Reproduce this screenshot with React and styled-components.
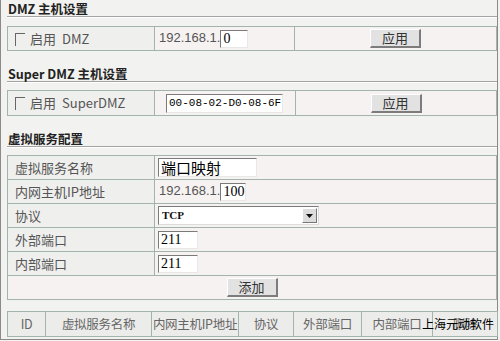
import React from "react"
import styled, { createGlobalStyle } from "styled-components"

const GlobalStyle = createGlobalStyle`
  html, body {
    margin: 0;
    padding: 0;
    background: #f2f2f0;
  }
  body {
    width: 500px;
    height: 341px;
    overflow: hidden;
    font-family: "Noto Sans CJK SC", "Liberation Sans", sans-serif;
  }
`

const cjk = `"Noto Sans CJK SC", "Liberation Sans", sans-serif`
const serif = `"Liberation Serif", "Noto Sans CJK SC", serif`

const Frame = styled.div`
  position: relative;
  width: 498px;
  height: 340px;
  box-sizing: border-box;
  border-left: 1px solid #8a8a8a;
  border-right: 1px solid #8a8a8a;
  border-bottom: 1px solid #8a8a8a;
  padding: 1px 0 0 6px;
  background: #f2f2f0;
`

const Section = styled.section`
  margin-top: ${p => (p.first ? "0" : "15px")};
`

const Title = styled.h3`
  margin: 0;
  height: 15px;
  line-height: 15px;
  font-family: ${cjk};
  font-size: 12.5px;
  font-weight: 700;
  color: #222;
  border-bottom: 1px solid #a3a3a3;
  box-shadow: 0 1px 0 #ffffff;
  padding-left: 1px;
`

const Table = styled.table`
  width: 490px;
  margin-top: ${p => p.gap || 8}px;
  border-collapse: collapse;
  table-layout: fixed;
  font-family: ${cjk};
  font-size: 13px;
  color: #555;
`

const Row = styled.tr`
  height: ${p => p.h || 24}px;
`

const Cell = styled.td`
  box-sizing: border-box;
  border: 1px solid #a2b4ab;
  padding: 0 0 0 ${p => (p.pad !== undefined ? p.pad : 7)}px;
  background: ${p => (p.label ? "#efefed" : "#f6f2f2")};
  white-space: nowrap;
  text-align: ${p => (p.center ? "center" : "left")};
  vertical-align: middle;
  line-height: 16px;
`

const HeadCell = styled.td`
  box-sizing: border-box;
  border: 1px solid #a2b4ab;
  background: #ececea;
  text-align: center;
  color: #666;
  font-size: 12.5px;
  letter-spacing: -0.3px;
  line-height: 16px;
  padding: 0;
  white-space: nowrap;
  overflow: hidden;
`

const Check = styled.span`
  display: inline-block;
  width: 9px;
  height: 12px;
  border-top: 1px solid #666;
  border-left: 1px solid #666;
  vertical-align: -2px;
  margin-right: 5px;
`

const Word = styled.span`
  margin-left: 6px;
`

const Field = styled.span`
  display: inline-block;
  box-sizing: border-box;
  width: ${p => p.w}px;
  height: ${p => p.h || 18}px;
  background: #fff;
  border-top: 1px solid #7a7a7a;
  border-left: 1px solid #7a7a7a;
  border-right: 1px solid #e8e8e8;
  border-bottom: 1px solid #e8e8e8;
  padding-left: 2px;
  font-family: ${p => (p.mono ? `"Liberation Mono", monospace` : p.cjk ? cjk : serif)};
  font-size: ${p => p.size || 14}px;
  line-height: ${p => (p.h || 18) - 2}px;
  color: #000;
  vertical-align: middle;
  overflow: hidden;
`

const Select = styled.span`
  display: inline-flex;
  box-sizing: border-box;
  width: 161px;
  height: 19px;
  background: #fff;
  border-top: 1px solid #7a7a7a;
  border-left: 1px solid #7a7a7a;
  border-right: 1px solid #dcdcdc;
  border-bottom: 1px solid #dcdcdc;
  vertical-align: middle;
`

const SelectText = styled.span`
  flex: 1;
  padding-left: 3px;
  font-family: ${serif};
  font-size: 11px;
  font-weight: 700;
  line-height: 17px;
  color: #111;
`

const Arrow = styled.span`
  width: 15px;
  height: 15px;
  margin: 1px;
  box-sizing: border-box;
  background: #dcdcdc;
  border-top: 1px solid #fff;
  border-left: 1px solid #fff;
  border-right: 1px solid #777;
  border-bottom: 1px solid #777;
  display: flex;
  align-items: center;
  justify-content: center;
`

const Button = styled.span`
  display: inline-block;
  box-sizing: border-box;
  width: ${p => p.w || 51}px;
  height: 19px;
  background: #e2e2e2;
  border-top: 1px solid #ffffff;
  border-left: 1px solid #ffffff;
  border-right: 2px solid #7c7c7c;
  border-bottom: 2px solid #7c7c7c;
  font-family: ${cjk};
  font-size: 13px;
  line-height: 15px;
  color: #333;
  text-align: center;
  vertical-align: middle;
`

const Watermark = styled.div`
  position: absolute;
  left: 421px;
  top: 315px;
  font-family: ${cjk};
  font-size: 12px;
  line-height: 17px;
  color: #000;
  white-space: nowrap;
`

const Ip = styled.span`
  color: #555;
  font-family: "Liberation Sans", sans-serif;
  font-size: 13px;
`

const headCols = [
  ["ID", 38],
  ["虚拟服务名称", 106],
  ["内网主机IP地址", 87],
  ["协议", 55],
  ["外部端口", 68],
  ["内部端口", 71],
  ["删除", 65],
]

export default function App() {
  return (
    <>
      <GlobalStyle />
      <Frame>
        <Section first>
          <Title>DMZ 主机设置</Title>
          <Table gap={9}>
            <colgroup>
              <col style={{ width: 147 }} />
              <col style={{ width: 140 }} />
              <col />
            </colgroup>
            <tbody>
              <Row>
                <Cell label>
                  <Check />启用<Word>DMZ</Word>
                </Cell>
                <Cell pad={4}>
                  <Ip>192.168.1.</Ip>
                  <Field w={28}>0</Field>
                </Cell>
                <Cell center pad={0}>
                  <Button>应用</Button>
                </Cell>
              </Row>
            </tbody>
          </Table>
        </Section>

        <Section>
          <Title>Super DMZ 主机设置</Title>
          <Table>
            <colgroup>
              <col style={{ width: 147 }} />
              <col style={{ width: 141 }} />
              <col />
            </colgroup>
            <tbody>
              <Row h={25}>
                <Cell label>
                  <Check />启用<Word>SuperDMZ</Word>
                </Cell>
                <Cell pad={11}>
                  <Field w={117} h={19} mono size={11}>00-08-02-D0-08-6F</Field>
                </Cell>
                <Cell center pad={0}>
                  <Button>应用</Button>
                </Cell>
              </Row>
            </tbody>
          </Table>
        </Section>

        <Section>
          <Title>虚拟服务配置</Title>
          <Table>
            <colgroup>
              <col style={{ width: 147 }} />
              <col />
            </colgroup>
            <tbody>
              <Row>
                <Cell label>虚拟服务名称</Cell>
                <Cell pad={3}>
                  <Field w={99} h={19} cjk size={15}>端口映射</Field>
                </Cell>
              </Row>
              <Row>
                <Cell label>内网主机IP地址</Cell>
                <Cell pad={4}>
                  <Ip>192.168.1.</Ip>
                  <Field w={26}>100</Field>
                </Cell>
              </Row>
              <Row>
                <Cell label>协议</Cell>
                <Cell pad={3}>
                  <Select>
                    <SelectText>TCP</SelectText>
                    <Arrow>
                      <svg width="7" height="4" viewBox="0 0 7 4">
                        <path d="M0 0h7L3.5 4z" fill="#111" />
                      </svg>
                    </Arrow>
                  </Select>
                </Cell>
              </Row>
              <Row>
                <Cell label>外部端口</Cell>
                <Cell pad={3}>
                  <Field w={40}>211</Field>
                </Cell>
              </Row>
              <Row>
                <Cell label>内部端口</Cell>
                <Cell pad={3}>
                  <Field w={40}>211</Field>
                </Cell>
              </Row>
              <Row>
                <Cell colSpan={2} center pad={0}>
                  <Button>添加</Button>
                </Cell>
              </Row>
            </tbody>
          </Table>
        </Section>

        <Table gap={11}>
          <colgroup>
            {headCols.map(([name, w]) => (
              <col key={name} style={{ width: w }} />
            ))}
          </colgroup>
          <tbody>
            <Row h={25}>
              {headCols.map(([name]) => (
                <HeadCell key={name}>{name}</HeadCell>
              ))}
            </Row>
          </tbody>
        </Table>

        <Watermark>上海元动软件</Watermark>
      </Frame>
    </>
  )
}
